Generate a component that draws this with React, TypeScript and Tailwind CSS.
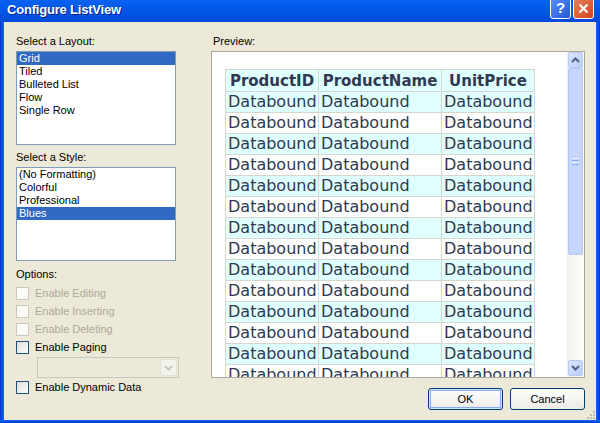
import React from 'react';

const layouts = ['Grid', 'Tiled', 'Bulleted List', 'Flow', 'Single Row'];
const styles = ['(No Formatting)', 'Colorful', 'Professional', 'Blues'];

function ListBox({ items, selected }: { items: string[]; selected: string }) {
  return (
    <div className="w-[160px] h-[94px] border border-[#7F9DB9] bg-white">
      {items.map((item) => (
        <div
          key={item}
          className={
            item === selected
              ? 'h-[13px] leading-[13px] pl-[2px] bg-[#316AC5] text-white'
              : 'h-[13px] leading-[13px] pl-[2px] text-black'
          }
        >
          {item}
        </div>
      ))}
    </div>
  );
}

function Check({ label, disabled }: { label: string; disabled?: boolean }) {
  return (
    <div className="flex items-center h-[13px] gap-[6px]">
      {disabled ? (
        <span className="w-[13px] h-[13px] shrink-0 border border-[#CAC8BB] bg-[#FBFBF8]" />
      ) : (
        <span className="w-[13px] h-[13px] shrink-0 border border-[#1C5180] bg-gradient-to-br from-[#DCDCD7] to-white" />
      )}
      <span className={disabled ? 'text-[#ACA899]' : 'text-black'}>{label}</span>
    </div>
  );
}

function Arrow({ down }: { down?: boolean }) {
  return (
    <svg width="9" height="6" viewBox="0 0 9 6">
      <path
        d={down ? 'M1 1 L4.5 4.5 L8 1' : 'M1 5 L4.5 1.5 L8 5'}
        fill="none"
        stroke="#4D6185"
        strokeWidth="2"
      />
    </svg>
  );
}

function ScrollBar() {
  return (
    <div className="w-[17px] flex flex-col bg-gradient-to-r from-[#F3F1EC] to-[#FEFEFB]">
      <div className="h-[16px] mx-[1px] rounded-[2px] border border-[#B6CBF7] bg-gradient-to-br from-[#DCE6FD] to-[#B9CCF7] flex items-center justify-center">
        <Arrow />
      </div>
      <div className="h-[187px] mx-[1px] rounded-[2px] border border-[#B3C7F5] bg-[#C6D5FB] flex items-center justify-center">
        <div className="flex flex-col gap-[1px]">
          <div className="w-[7px] h-[1px] bg-[#EEF4FE]" />
          <div className="w-[7px] h-[1px] bg-[#8CB0F8]" />
          <div className="w-[7px] h-[1px] bg-[#EEF4FE]" />
          <div className="w-[7px] h-[1px] bg-[#8CB0F8]" />
        </div>
      </div>
      <div className="flex-1" />
      <div className="h-[16px] mx-[1px] mb-[1px] rounded-[2px] border border-[#B6CBF7] bg-gradient-to-br from-[#DCE6FD] to-[#B9CCF7] flex items-center justify-center">
        <Arrow down />
      </div>
    </div>
  );
}

function PreviewTable() {
  const rows = Array.from({ length: 15 }, (_, i) => i);
  return (
    <table
      className="border-collapse table-fixed text-[#30394F]"
      style={{ fontFamily: '"DejaVu Sans", Verdana, sans-serif' }}
    >
      <colgroup>
        <col className="w-[93px]" />
        <col className="w-[123px]" />
        <col className="w-[93px]" />
      </colgroup>
      <thead>
        <tr className="bg-[#E0FFFF] h-[22px]">
          {['ProductID', 'ProductName', 'UnitPrice'].map((h) => (
            <th
              key={h}
              className="border border-[#D6D8D0] p-0 text-center text-[15px] leading-[20px] font-bold whitespace-nowrap"
            >
              {h}
            </th>
          ))}
        </tr>
      </thead>
      <tbody>
        {rows.map((r) => (
          <tr key={r} className={r % 2 === 0 ? 'bg-[#E0FFFF] h-[21px]' : 'bg-white h-[21px]'}>
            {[0, 1, 2].map((c) => (
              <td
                key={c}
                className="border border-[#D6D8D0] p-0 pl-[2px] text-left text-[16px] leading-[20px] whitespace-nowrap"
              >
                Databound
              </td>
            ))}
          </tr>
        ))}
      </tbody>
    </table>
  );
}

function XpButton({ label, primary }: { label: string; primary?: boolean }) {
  return (
    <button
      className={
        primary
          ? 'w-[75px] h-[22px] rounded-[3px] border border-[#003C74] bg-gradient-to-b from-white to-[#ECEBE6] shadow-[inset_0_0_0_1px_#CEE7FF,inset_0_0_0_2px_#89ADE4] text-black text-[11px] leading-[14px]'
          : 'w-[75px] h-[22px] rounded-[3px] border border-[#003C74] bg-gradient-to-b from-white to-[#ECEBE6] text-black text-[11px] leading-[14px]'
      }
    >
      {label}
    </button>
  );
}

export default function App() {
  return (
    <div
      className="w-[600px] h-[423px] flex flex-col overflow-hidden text-[11px]"
      style={{ fontFamily: '"Liberation Sans", Arial, sans-serif' }}
    >
      {/* Title bar */}
      <div className="h-[22px] shrink-0 flex items-start justify-between bg-gradient-to-b from-[#0A62F2] via-[#0056E6] to-[#0049D8] overflow-hidden">
        <div className="pl-[7px] pt-[2px] text-white font-bold text-[13px] leading-[16px] tracking-[-0.2px] [text-shadow:1px_1px_0_#0A1E8C]">
          Configure ListView
        </div>
        <div className="flex gap-[2px] pr-[6px] -mt-[2px]">
          <div className="w-[21px] h-[21px] rounded-[3px] border border-white bg-gradient-to-br from-[#5A8FF8] to-[#2157D8] flex items-center justify-center text-white font-bold text-[15px]">
            ?
          </div>
          <div className="w-[21px] h-[21px] rounded-[3px] border border-white bg-gradient-to-br from-[#E8805E] to-[#D2431A] flex items-center justify-center">
            <svg width="11" height="11" viewBox="0 0 11 11">
              <path d="M1.5 1.5 L9.5 9.5 M9.5 1.5 L1.5 9.5" stroke="white" strokeWidth="2" />
            </svg>
          </div>
        </div>
      </div>

      <div className="flex-1 flex">
        <div className="w-[4px] bg-gradient-to-r from-[#0831D9] to-[#166AEE]" />
        <div className="flex-1 flex flex-col bg-[#ECE9D8] relative">
          <div className="flex-1 flex pl-[12px] pt-[12px] gap-[32px]">
            {/* Left column */}
            <div className="w-[163px] flex flex-col">
              <div className="h-[14px] leading-[14px] mb-[3px]">Select a Layout:</div>
              <ListBox items={layouts} selected="Grid" />
              <div className="h-[14px] leading-[14px] mt-[5px] mb-[3px]">Select a Style:</div>
              <ListBox items={styles} selected="Blues" />
              <div className="h-[14px] leading-[14px] mt-[6px]">Options:</div>
              <div className="flex flex-col gap-[5px] mt-[6px]">
                <Check label="Enable Editing" disabled />
                <Check label="Enable Inserting" disabled />
                <Check label="Enable Deleting" disabled />
                <Check label="Enable Paging" />
              </div>
              <div className="ml-[21px] w-[142px] h-[21px] mt-[3px] border border-[#C9C7BA] bg-[#EBEADB] flex justify-end p-[1px]">
                <div className="w-[17px] rounded-[2px] bg-[#F3F2EC] border border-[#E2E1D8] flex items-center justify-center">
                  <svg width="9" height="6" viewBox="0 0 9 6">
                    <path d="M1 1 L4.5 4.5 L8 1" fill="none" stroke="#C9C7BA" strokeWidth="2" />
                  </svg>
                </div>
              </div>
              <div className="mt-[3px]">
                <Check label="Enable Dynamic Data" />
              </div>
            </div>

            {/* Right column */}
            <div className="w-[374px] flex flex-col">
              <div className="h-[14px] leading-[14px] mb-[3px] pl-[2px]">Preview:</div>
              <div className="h-[327px] border border-[#ACA899] bg-white flex">
                <div className="flex-1 overflow-hidden pl-[13px] pt-[17px]">
                  <PreviewTable />
                </div>
                <ScrollBar />
              </div>
              <div className="flex justify-end gap-[7px] mt-[10px]">
                <XpButton label="OK" primary />
                <XpButton label="Cancel" />
              </div>
            </div>
          </div>
          {/* resize grip */}
          <div className="absolute right-[1px] bottom-[1px] grid grid-cols-3 gap-[1px]">
            <span className="w-[2px] h-[2px]" />
            <span className="w-[2px] h-[2px]" />
            <span className="w-[2px] h-[2px] bg-[#C0BDAE]" />
            <span className="w-[2px] h-[2px]" />
            <span className="w-[2px] h-[2px] bg-[#C0BDAE]" />
            <span className="w-[2px] h-[2px] bg-[#C0BDAE]" />
            <span className="w-[2px] h-[2px] bg-[#C0BDAE]" />
            <span className="w-[2px] h-[2px] bg-[#C0BDAE]" />
            <span className="w-[2px] h-[2px] bg-[#C0BDAE]" />
          </div>
          <div className="h-[10px]" />
        </div>
        <div className="w-[4px] bg-gradient-to-r from-[#166AEE] to-[#0831D9]" />
      </div>
      <div className="h-[3px] shrink-0 bg-gradient-to-b from-[#166AEE] to-[#0831D9]" />
    </div>
  );
}
